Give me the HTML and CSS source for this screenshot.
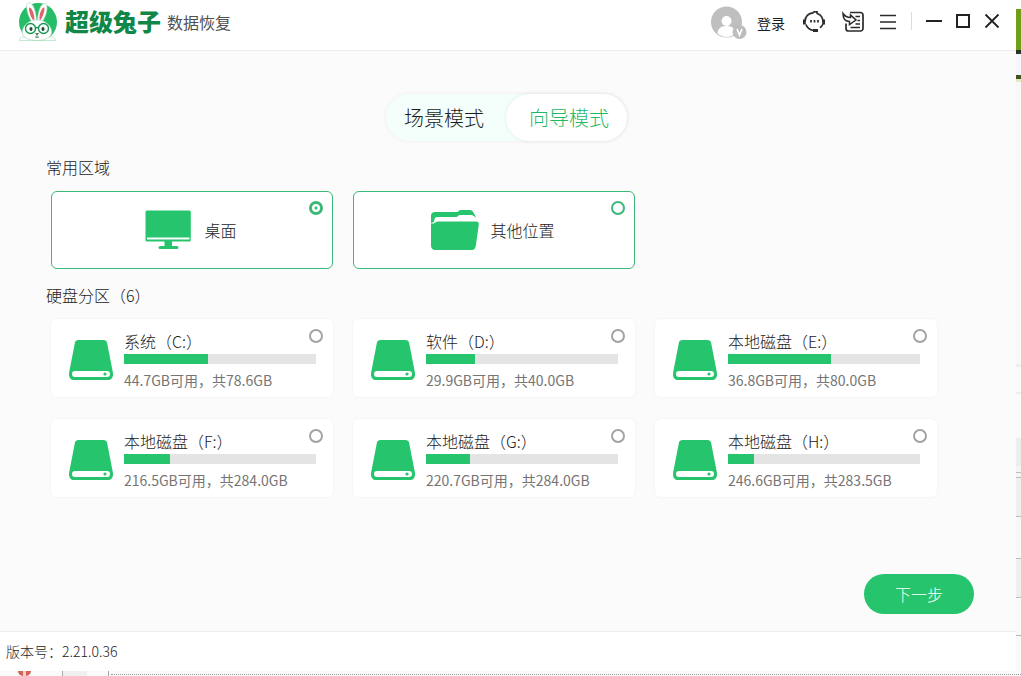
FILE: index.html
```
<!DOCTYPE html>
<html lang="zh-CN">
<head>
<meta charset="utf-8">
<meta name="viewport" content="width=device-width, initial-scale=1">
<title>超级兔子数据恢复</title>
<link rel="stylesheet" href="styles.css">
</head>
<body>
<svg class="defs" width="0" height="0" aria-hidden="true">
  <symbol id="disk" viewBox="0 0 44 40">
    <path fill="#26c56d" d="M9.500 0h25c2 0 3.200 1 3.600 2.800L43.600 31c.2 1 .4 2 .4 3.500 0 3.500-2 5.500-5 5.500H5c-3 0-5-2-5-5.500C0 33 .2 32 .4 31L5.900 2.800C6.300 1 7.500 0 9.500 0z"/>
    <rect x="3" y="31" width="38" height="6" rx="3" fill="#fff"/>
    <circle cx="36" cy="34" r="1.600" fill="#26c56d"/>
  </symbol>
</svg>
<div class="desktop">
  <div class="window">
    <header class="header">
      <svg class="logo" viewBox="0 0 40 42" aria-hidden="true">
        <circle cx="20" cy="22" r="19" fill="#25bd67"/>
        <path d="M1.500 40.500c0-4 4-4.500 7-3l3 1h15l3-1c3-1.500 8-1 8 3z" fill="#fff" stroke="#9fd6b4" stroke-width=".6"/>
        <g fill="#fff" stroke="#a3d9b8" stroke-width=".6">
          <path d="M15.500 24C10.500 19 6 4 10.500 2.500 15 2 18.500 12 18.500 22z"/>
          <path d="M22 24c6-5 9.500-19 5-20.500C22.500 2.500 19.500 13 19.500 22z"/>
          <path d="M19 20c8 0 13 5 14.500 10C35 36 29 40.500 19 40.500S3 36 4.500 30C6 25 11 20 19 20z"/>
        </g>
        <path d="M15 20c-3-4-5-12-3.500-12.500s5 5 5 12zM22.500 20c3-4 5-12 3.500-12.500s-5 5-4.500 12z" fill="#e0646c"/>
        <g fill="#f3fff7" stroke="#159351" stroke-width="1.300">
          <circle cx="12.500" cy="28.500" r="5"/><circle cx="25.500" cy="28.500" r="5"/>
          <path d="M17.500 28q1.500-1 3 0" fill="none"/>
        </g>
        <ellipse cx="13" cy="29" rx="1.500" ry="2" fill="#25433a"/><ellipse cx="25" cy="29" rx="1.500" ry="2" fill="#25433a"/>
        <path d="M17.500 33.500h3L19 35zM19 35v2M17 37q2 1 4 0" fill="none" stroke="#356b4c" stroke-width=".8"/>
      </svg>
      <h1 class="brand"><span class="brand-name">超级兔子</span><span class="brand-product">数据恢复</span></h1>
      <nav class="tools" aria-label="工具栏">
        <button class="login" type="button">
          <svg class="avatar" viewBox="0 0 36 34" aria-hidden="true">
            <circle cx="15.500" cy="16" r="15.500" fill="#bfbfbf"/>
            <circle cx="15.500" cy="15" r="5" fill="#fff"/>
            <path d="M6.500 27.500c0-5 3.500-7.500 9-7.500s9 2.500 9 7.500c-5 4.500-13 4.500-18 0z" fill="#fff"/>
            <circle cx="28.500" cy="26" r="7" fill="#bdbdbd"/>
            <path d="M26 23l2.500 6 2.500-6" fill="none" stroke="#fff" stroke-width="1.700"/>
          </svg>
          <span>登录</span>
        </button>
        <button class="tool" type="button" aria-label="客服">
          <svg viewBox="0 0 22 22" fill="none" stroke="#2b2b2b" stroke-width="1.700">
            <path d="M2 10.500C2 5.500 5.500 2 10 1.800c1-1.200 2.500-1.500 4-1-.6 1.200.2 1.700 1.300 2.200 3 1.400 4.500 4.300 4.700 7.500M3 13.500c1 3.300 3.500 5.300 7.500 6"/>
            <path d="M1.400 8.500v5M20.600 8.500v5" stroke-width="2.800"/><path d="M20 13c-.8 1.700-1.600 2.700-3 3.700"/>
            <path d="M10 19.500h5" stroke-width="3"/>
            <path d="M8 9v2.400M11.500 9v2.400M15 9v2.400" stroke-width="1.700"/>
          </svg>
        </button>
        <button class="tool" type="button" aria-label="导入">
          <svg viewBox="0 0 22 22" fill="none" stroke="#2b2b2b" stroke-width="1.700">
            <path d="M8 1.500h10.500a2.500 2.500 0 0 1 2.500 2.500v13.500a2.500 2.500 0 0 1-2.500 2.500H6.500A2.500 2.500 0 0 1 4 17.500V12.500"/>
            <path d="M1 2.500C1 7.500 3 10.500 7.500 10.500v3L14 9 8.500 4v2.500C5 6.500 3 5.500 1 2.500z" stroke-width="1.500"/>
            <path d="M13.500 5.500h4.500M15.500 9.500H18M13.500 13H18M8.500 16.500H18" stroke-width="1.400"/>
          </svg>
        </button>
        <button class="tool" type="button" aria-label="菜单">
          <svg viewBox="0 0 22 22" stroke="#2b2b2b" stroke-width="1.700"><path d="M3 4.500h16M3 11h16M3 17.500h16"/></svg>
        </button>
        <span class="divider"></span>
        <button class="win" type="button" aria-label="最小化">
          <svg viewBox="0 0 16 16" stroke="#222" stroke-width="2"><path d="M0 8h16"/></svg>
        </button>
        <button class="win" type="button" aria-label="最大化">
          <svg viewBox="0 0 16 16" fill="none" stroke="#222" stroke-width="2"><path d="M2 2h12v12H2z"/></svg>
        </button>
        <button class="win" type="button" aria-label="关闭">
          <svg viewBox="0 0 16 16" stroke="#222" stroke-width="1.800"><path d="M1.500 1.500l13 13M14.500 1.500l-13 13"/></svg>
        </button>
      </nav>
    </header>

    <main class="main">
      <div class="tabs" role="tablist">
        <button class="tab" type="button" role="tab" aria-selected="false">场景模式</button>
        <button class="tab tab-active" type="button" role="tab" aria-selected="true">向导模式</button>
      </div>

      <h2 class="heading">常用区域</h2>
      <div class="cards">
        <label class="card place">
          <svg viewBox="0 0 48 42" fill="#26c56d" aria-hidden="true">
            <path fill-rule="evenodd" d="M2.500 1.500h41.800a1.500 1.500 0 0 1 1.500 1.500v28a1.500 1.500 0 0 1-1.500 1.500H2A1.500 1.500 0 0 1 .5 31V3A1.500 1.500 0 0 1 2 1.500zM2 28.500v2h42.500v-2z"/>
            <path d="M19.500 32h7.500v5h5a1.500 1.500 0 0 1 0 3H15a1.500 1.500 0 0 1 0-3h4.500z"/>
          </svg>
          <span>桌面</span>
          <input class="radio" type="radio" name="target" checked>
        </label>
        <label class="card place">
          <svg viewBox="0 0 48 42" fill="#26c56d" aria-hidden="true">
            <path d="M0 14V7c0-3 1.500-4 4-4h22c1 0 2-2 4-2h9c3 0 5 5 6 8-2-2-3-3-5-3H29c-2 0-2 2-4 2H6c-2 0-3 2-3 5z"/>
            <path d="M0 14.500h3c1-1 2-2 4-2h38c2 0 3 1 2.800 3L45 35.500c-.6 4-1.500 5.500-4.500 5.500H5c-3.500 0-5-1.500-5-5z"/>
          </svg>
          <span>其他位置</span>
          <input class="radio" type="radio" name="target">
        </label>
      </div>

      <h2 class="heading">硬盘分区（6）</h2>
      <div class="cards">
        <label class="card disk">
          <svg aria-hidden="true"><use href="#disk"/></svg>
          <span class="info"><span class="name">系统（C:）</span><span class="bar"><span class="used" style="width:43.75%"></span></span><span class="space">44.7GB可用，共78.6GB</span></span>
          <input class="radio" type="radio" name="target">
        </label>
        <label class="card disk">
          <svg aria-hidden="true"><use href="#disk"/></svg>
          <span class="info"><span class="name">软件（D:）</span><span class="bar"><span class="used" style="width:25.5%"></span></span><span class="space">29.9GB可用，共40.0GB</span></span>
          <input class="radio" type="radio" name="target">
        </label>
        <label class="card disk">
          <svg aria-hidden="true"><use href="#disk"/></svg>
          <span class="info"><span class="name">本地磁盘（E:）</span><span class="bar"><span class="used" style="width:53.6%"></span></span><span class="space">36.8GB可用，共80.0GB</span></span>
          <input class="radio" type="radio" name="target">
        </label>
        <label class="card disk">
          <svg aria-hidden="true"><use href="#disk"/></svg>
          <span class="info"><span class="name">本地磁盘（F:）</span><span class="bar"><span class="used" style="width:24%"></span></span><span class="space">216.5GB可用，共284.0GB</span></span>
          <input class="radio" type="radio" name="target">
        </label>
        <label class="card disk">
          <svg aria-hidden="true"><use href="#disk"/></svg>
          <span class="info"><span class="name">本地磁盘（G:）</span><span class="bar"><span class="used" style="width:22.9%"></span></span><span class="space">220.7GB可用，共284.0GB</span></span>
          <input class="radio" type="radio" name="target">
        </label>
        <label class="card disk">
          <svg aria-hidden="true"><use href="#disk"/></svg>
          <span class="info"><span class="name">本地磁盘（H:）</span><span class="bar"><span class="used" style="width:13.5%"></span></span><span class="space">246.6GB可用，共283.5GB</span></span>
          <input class="radio" type="radio" name="target">
        </label>
      </div>

      <button class="next" type="button">下一步</button>
    </main>

    <footer class="footer">版本号：2.21.0.36</footer>
  </div>
  <div class="edge-right"></div>
  <div class="edge-bottom"><span class="edge-mark"></span><span class="edge-tab"></span><span class="edge-line"></span></div>
</div>
</body>
</html>
```

FILE: styles.css
```
* { box-sizing: border-box; }

body {
  margin: 0;
  font-family: "Noto Sans CJK SC", sans-serif;
  font-weight: 300;
  font-size: 16px;
  color: #1c1c1c;
}

button {
  font: inherit;
  color: inherit;
  background: none;
  border: 0;
  padding: 0;
  cursor: pointer;
}

svg { display: block; flex: none; }
.defs { position: absolute; }

.desktop {
  display: grid;
  grid-template-columns: 1fr 5px;
  grid-template-rows: 1fr 5px;
  min-height: 100vh;
}

.window {
  display: flex;
  flex-direction: column;
  padding-right: 3px;
  background: #fbfbfb;
}

/* Title bar */
.header {
  display: flex;
  align-items: center;
  height: 51px;
  padding: 0 16px 8px 18px;
  margin-right: -3px;
  background: #fff;
  border-bottom: 1px solid #ececec;
}
.logo { width: 40px; height: 42px; }
.brand {
  display: flex;
  align-items: center;
  gap: 6px;
  margin: 0 0 0 7px;
  font-weight: 400;
  line-height: 24px;
}
.brand-name {
  font-size: 24px;
  font-weight: 900;
  color: #108746;
}
.brand-product { font-size: 16px; color: #505050; padding-top: 2px; }
.tools {
  display: flex;
  align-items: center;
  margin-left: auto;
}
.login {
  display: flex;
  align-items: center;
  gap: 10px;
  margin-right: 18px;
  padding-top: 3px;
  font-size: 14px;
  font-weight: 400;
}
.avatar { width: 36px; height: 34px; }
.tool { margin-right: 17px; padding-top: 1px; }
.tool:nth-of-type(4) { margin: 0 12px 0 -4px; }
.tool svg { width: 22px; height: 22px; }
.divider { width: 1px; height: 18px; background: #dcdcdc; margin-right: 14px; }
.win { margin-right: 13px; }
.win:last-child { margin-right: 0; }
.win svg { width: 16px; height: 16px; }

/* Content */
.main {
  display: flex;
  flex-direction: column;
  flex: 1;
  padding: 43px 0 17px;
}

.tabs {
  display: flex;
  align-self: center;
  height: 47px;
  border-radius: 24px;
  background: #f4fefa;
  box-shadow: 0 0 4px rgba(0, 0, 0, 0.06);
}
.tab { padding: 0 22px 0 18px; font-size: 20px; }
.tab-active {
  padding: 0 18px 0 23px;
  border-radius: 24px;
  background: #fff;
  color: #1fb863;
  box-shadow: 0 0 4px rgba(0, 0, 0, 0.08);
}

.heading {
  margin: 14px 46px 12px;
  font-size: 16px;
  font-weight: 300;
  line-height: 24px;
}

.cards {
  display: grid;
  grid-template-columns: repeat(3, 1fr);
  gap: 22px 20px;
  margin: 0 76px 0 51px;
}
.card {
  position: relative;
  display: flex;
  height: 78px;
  border-radius: 6px;
  background: #fff;
}

.place {
  align-items: center;
  justify-content: center;
  gap: 11px;
  padding-right: 2px;
  border: 1px solid #3db878;
}
.place svg { width: 48px; height: 42px; }

.disk {
  align-items: flex-start;
  gap: 11px;
  padding: 10px 17px 6px 18px;
  box-shadow: 0 0 3px rgba(0, 0, 0, 0.06);
}
.disk svg { width: 44px; height: 40px; margin-top: 11px; }
.info { display: flex; flex-direction: column; flex: 1; }
.name { line-height: 24px; }
.bar { height: 10px; margin-top: 1px; background: #e4e4e4; }
.used { display: block; height: 100%; background: #26c56d; }
.space { margin-top: 6px; font-size: 14px; font-weight: 400; line-height: 20px; color: #757575; }

.radio {
  position: absolute;
  top: 10px;
  right: 10px;
  appearance: none;
  width: 14px;
  height: 14px;
  margin: 0;
  border: 2px solid #a3a3a3;
  border-radius: 50%;
  background: #fff;
}
.place .radio { top: 9px; right: 9px; border-color: #3db878; }
.place .radio:checked {
  border-width: 3px;
  background: radial-gradient(circle, #3db878 0 1px, #fff 2px);
}

.next {
  align-self: flex-end;
  min-width: 110px;
  height: 40px;
  margin: auto 39px 0 0;
  border-radius: 20px;
  background: #26c56d;
  color: #fff;
}

.footer {
  padding: 8px 6px;
  margin-right: -3px;
  border-top: 1px solid #ededed;
  background: #fff;
  font-size: 14px;
  line-height: 23px;
}

/* What shows of the desktop behind the window */
.edge-right {
  background: linear-gradient(
    #fff 0 9px, #6f9f16 9px 50px, #2e3328 50px 54px, #f7f5fc 54px 75px,
    #43531d 75px 79px, #dfeac4 79px 82px, #f8f8f8 82px 364px, #eeeeee 364px 367px,
    #fafafa 367px 392px, #eeeeee 392px 394px, #fafafa 394px 438px, #ebeeed 438px 466px,
    #f4f4f4 466px 472px, #bdbdbd 472px 473px, #f4f4f4 473px 477px, #bdbdbd 477px 478px,
    #efefef 478px 516px, #bdbdbd 516px 517px, #f7f7f7 517px 558px, #bdbdbd 558px 559px,
    #efefef 559px 597px, #bdbdbd 597px 598px, #f9f9f9 598px 635px, #b5b5b5 635px 636px,
    #f9f9f9 636px);
}
.edge-bottom {
  grid-column: 1 / -1;
  display: flex;
  padding-left: 18px;
  background: #fafafa;
}
.edge-mark {
  width: 13px;
  margin-right: 31px;
  border-radius: 0 0 8px 8px;
  background: linear-gradient(90deg, #cf6657 0 5px, #f3d0ca 5px 8px, #cf6657 8px);
}
.edge-tab {
  width: 47px;
  border: solid #aaa;
  border-width: 0 1px;
  background: linear-gradient(90deg, #efefef 0 24px, #fafafa 24px);
}
.edge-line { flex: 1; height: 4px; margin-left: 2px; border-bottom: 1px dotted #999; }
```
